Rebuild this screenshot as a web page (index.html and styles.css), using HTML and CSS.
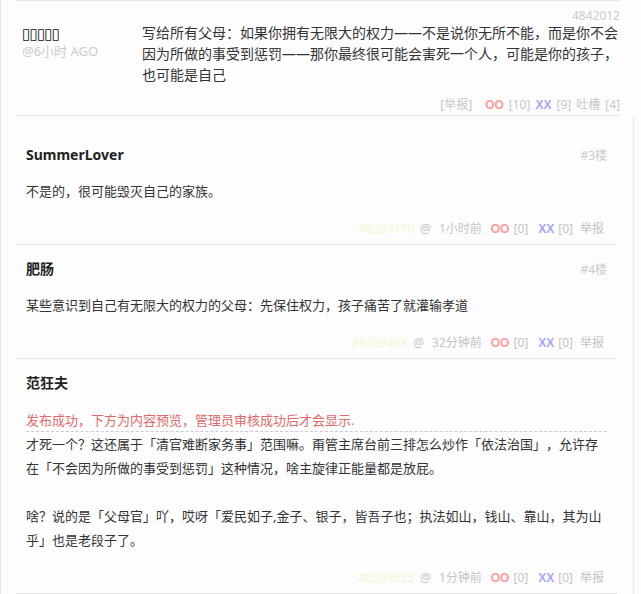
FILE: index.html
```html
<!DOCTYPE html>
<html lang="zh-CN">
<head>
<meta charset="utf-8">
<title>吐槽</title>
<link rel="stylesheet" href="styles.css">
</head>
<body>
<div class="page">
  <div class="post">
    <div class="author">
      <div class="author-name">▯▯▯▯▯</div>
      <div class="author-time">@6小时 AGO</div>
    </div>
    <div class="post-main">
      <div class="post-id">4842012</div>
      <div class="post-text">写给所有父母：如果你拥有无限大的权力——不是说你无所不能，而是你不会因为所做的事受到惩罚——那你最终很可能会害死一个人，可能是你的孩子，也可能是自己</div>
      <div class="post-actions">
        <span class="report">[举报]</span>
        <span class="oo">OO</span><span>[10]</span>
        <span class="xx">XX</span><span>[9]</span>
        <span>吐槽</span><span>[4]</span>
      </div>
    </div>
  </div>

  <div class="comments">
    <div class="comment">
      <div class="c-head"><span class="c-name">SummerLover</span><span class="c-floor">#3楼</span></div>
      <div class="c-body"><p>不是的，很可能毁灭自己的家族。</p></div>
      <div class="c-actions">
        <span class="c-id">#8339170</span><span class="at">@</span><span class="time">1小时前</span>
        <span class="oo">OO</span><span class="num">[0]</span>
        <span class="xx">XX</span><span class="num">[0]</span>
        <span class="rep">举报</span>
      </div>
    </div>

    <div class="comment">
      <div class="c-head"><span class="c-name">肥肠</span><span class="c-floor">#4楼</span></div>
      <div class="c-body"><p>某些意识到自己有无限大的权力的父母：先保住权力，孩子痛苦了就灌输孝道</p></div>
      <div class="c-actions">
        <span class="c-id">#8339408</span><span class="at">@</span><span class="time">32分钟前</span>
        <span class="oo">OO</span><span class="num">[0]</span>
        <span class="xx">XX</span><span class="num">[0]</span>
        <span class="rep">举报</span>
      </div>
    </div>

    <div class="comment">
      <div class="c-head"><span class="c-name">范狂夫</span></div>
      <div class="notice">发布成功，下方为内容预览，管理员审核成功后才会显示.</div>
      <div class="c-body after-notice">
        <p>才死一个？这还属于「清官难断家务事」范围嘛。甭管主席台前三排怎么炒作「依法治国」，允许存在「不会因为所做的事受到惩罚」这种情况，啥主旋律正能量都是放屁。</p>
        <p class="para">啥？说的是「父母官」吖，哎呀「爱民如子,金子、银子，皆吾子也；执法如山，钱山、靠山，其为山乎」也是老段子了。</p>
      </div>
      <div class="c-actions">
        <span class="c-id">#8339555</span><span class="at">@</span><span class="time">1分钟前</span>
        <span class="oo">OO</span><span class="num">[0]</span>
        <span class="xx">XX</span><span class="num">[0]</span>
        <span class="rep">举报</span>
      </div>
    </div>
  </div>
</div>
</body>
</html>
```

FILE: styles.css
```css
* { box-sizing: border-box; }
html, body { margin: 0; padding: 0; }
body {
  background: #fdfdfd;
  font-family: "Noto Sans", "Noto Sans CJK SC", sans-serif;
  color: #333;
  width: 641px;
  height: 594px;
  overflow: hidden;
  text-spacing-trim: space-all;
}
p { margin: 0; }
.page {
  border-left: 1px solid #e6e6e6;
  min-height: 594px;
}

/* post */
.post {
  display: flex;
  margin: 0 21px 0 15px;
  height: 116px;
  border-top: 1px solid #e8e8e8;
  border-bottom: 1px solid #e8e8e8;
}
.author {
  width: 126px;
  padding: 24px 0 0 6px;
}
.author-name {
  font-family: "DejaVu Sans", sans-serif;
  font-size: 15px;
  font-weight: bold;
  letter-spacing: -0.8px;
  line-height: 18px;
  height: 18px;
  color: #111;
}
.author-time {
  font-size: 13px;
  line-height: 16px;
  color: #ccc;
}
.post-main {
  width: 478px;
  padding-top: 9px;
}
.post-id {
  text-align: right;
  font-size: 12px;
  line-height: 12px;
  height: 12px;
  color: #ccc;
}
.post-text {
  font-size: 14px;
  line-height: 21px;
  color: #333;
}
.post-actions {
  margin-top: 12px;
  display: flex;
  justify-content: flex-end;
  gap: 5px;
  font-size: 12px;
  line-height: 16px;
  color: #c8c8c8;
}
.post-actions .report { margin-right: 8px; }
.oo { color: #ff9a9a; font-weight: bold; font-family: "Liberation Sans", sans-serif; }
.xx { color: #a6a6ff; font-weight: bold; font-family: "Liberation Sans", sans-serif; }

/* comments */
.comments {
  margin-right: 7px;
  border-right: 1px solid #e8e8e8;
  padding: 15px 16px 0 15px;
}
.comment {
  padding: 12px 10px 5px;
  border-bottom: 1px solid #e5e5e5;
}
.c-head {
  display: flex;
  justify-content: space-between;
  align-items: baseline;
  height: 24px;
  line-height: 24px;
}
.c-name {
  font-size: 14px;
  font-weight: bold;
  color: #222;
}
.c-floor {
  font-size: 12px;
  color: #ccc;
}
.c-body {
  margin-top: 12px;
  font-size: 13px;
  line-height: 24px;
  color: #333;
}
.c-body .para { margin-top: 24px; }
.c-body.after-notice { margin-top: 0; }
.notice {
  margin-top: 14px;
  font-size: 13px;
  line-height: 22px;
  color: #e06a6a;
  border-bottom: 1px dashed #ccc;
}
.c-actions {
  margin-top: 16px;
  display: flex;
  justify-content: flex-end;
  font-size: 12px;
  line-height: 20px;
  color: #c4c4c4;
  padding-right: 3px;
}
.c-id { color: #f8f4d4; }
.at { margin-left: 6px; }
.time { margin-left: 8px; }
.c-actions .oo { margin-left: 9px; }
.num { margin-left: 4px; }
.c-actions .xx { margin-left: 10px; }
.rep { margin-left: 7px; }
```
